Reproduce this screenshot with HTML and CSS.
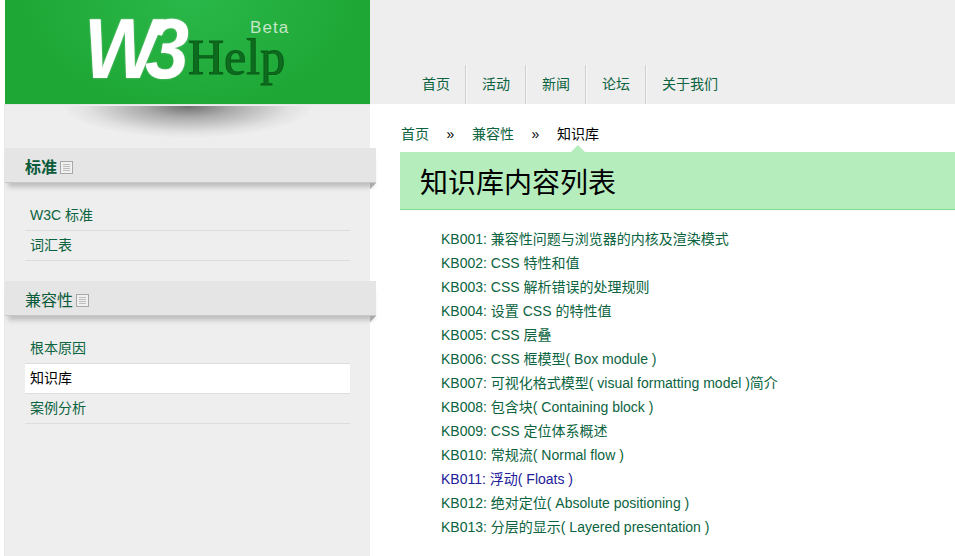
FILE: index.html
```html
<!DOCTYPE html>
<html lang="zh">
<head>
<meta charset="utf-8">
<title>W3Help 知识库</title>
<link rel="stylesheet" href="styles.css">
</head>
<body>
<header class="top">
  <a class="logo" href="#">
    <span class="logo-w3">W3</span>
    <span class="logo-help">Help</span>
    <span class="logo-beta">Beta</span>
  </a>
  <nav class="nav">
    <a href="#">首页</a>
    <a href="#">活动</a>
    <a href="#">新闻</a>
    <a href="#">论坛</a>
    <a href="#">关于我们</a>
  </nav>
</header>
<div class="page">
  <aside class="side">
    <div class="logo-shadow"></div>
    <section class="group">
      <h2 class="group-title">标准<svg class="ico" width="13" height="13" viewBox="0 0 13 13"><rect x=".5" y=".5" width="12" height="12" fill="#f0f0f0" stroke="#a8a8a8"/><path d="M3 3.5h7M3 5.5h7M3 7.5h7M3 9.5h7" stroke="#bdbdbd"/></svg></h2>
      <ul class="links">
        <li><a href="#">W3C 标准</a></li>
        <li><a href="#">词汇表</a></li>
      </ul>
    </section>
    <section class="group">
      <h2 class="group-title">兼容性<svg class="ico" width="13" height="13" viewBox="0 0 13 13"><rect x=".5" y=".5" width="12" height="12" fill="#f0f0f0" stroke="#a8a8a8"/><path d="M3 3.5h7M3 5.5h7M3 7.5h7M3 9.5h7" stroke="#bdbdbd"/></svg></h2>
      <ul class="links">
        <li><a href="#">根本原因</a></li>
        <li class="on"><a href="#">知识库</a></li>
        <li><a href="#">案例分析</a></li>
      </ul>
    </section>
  </aside>
  <main class="main">
    <div class="crumbs">
      <a href="#">首页</a><span class="sep">»</span><a href="#">兼容性</a><span class="sep">»</span><span class="cur">知识库</span>
    </div>
    <h1 class="title">知识库内容列表</h1>
    <ul class="kb">
      <li><a href="#">KB001: 兼容性问题与浏览器的内核及渲染模式</a></li>
      <li><a href="#">KB002: CSS 特性和值</a></li>
      <li><a href="#">KB003: CSS 解析错误的处理规则</a></li>
      <li><a href="#">KB004: 设置 CSS 的特性值</a></li>
      <li><a href="#">KB005: CSS 层叠</a></li>
      <li><a href="#">KB006: CSS 框模型( Box module )</a></li>
      <li><a href="#">KB007: 可视化格式模型( visual formatting model )简介</a></li>
      <li><a href="#">KB008: 包含块( Containing block )</a></li>
      <li><a href="#">KB009: CSS 定位体系概述</a></li>
      <li><a href="#">KB010: 常规流( Normal flow )</a></li>
      <li><a class="visited" href="#">KB011: 浮动( Floats )</a></li>
      <li><a href="#">KB012: 绝对定位( Absolute positioning )</a></li>
      <li><a href="#">KB013: 分层的显示( Layered presentation )</a></li>
    </ul>
  </main>
</div>
</body>
</html>
```
FILE: styles.css
```css
* { box-sizing: border-box; }
html, body { margin: 0; padding: 0; height: 100%; }
body {
  background: #fff;
  color: #000;
  font: 14px/24px "Liberation Sans", "Noto Sans CJK SC", sans-serif;
  overflow: hidden;
}
a { color: #0b6340; text-decoration: none; }
ul { list-style: none; margin: 0; padding: 0; }

.top { display: flex; height: 104px; padding-left: 5px; }
.logo {
  position: relative;
  display: block;
  flex: 0 0 365px;
  overflow: hidden;
  background: radial-gradient(ellipse 170px 110px at 185px 0, #2ab84a 0, #1ea735 100%);
}
.logo-w3 {
  position: absolute;
  left: 79px;
  top: 5px;
  font: italic bold 86px/86px "Liberation Sans", sans-serif;
  letter-spacing: -15px;
  color: #fff;
  text-shadow: 0 0 2px #9ac8a0;
  transform: scaleX(.92);
  transform-origin: 0 0;
}
.logo-help {
  position: absolute;
  left: 183px;
  top: 35px;
  font: 50px/44px "Liberation Serif", serif;
  color: #0e6c1f;
  -webkit-text-stroke: 1px #0a5c18;
}
.logo-beta {
  position: absolute;
  left: 245px;
  top: 20px;
  font: 17px/15px "Liberation Sans", sans-serif;
  letter-spacing: 1.1px;
  color: #c6e6c8;
}

.nav {
  flex: 1;
  display: flex;
  align-items: flex-end;
  background: #eee;
  padding-left: 36px;
}
.nav a {
  height: 39px;
  padding: 7px 15px 0 16px;
  border-right: 1px solid #cfcfcf;
  line-height: 24px;
  box-shadow: 1px 0 0 #f8f8f8;
}
.nav a:last-child { border-right: 0; box-shadow: none; }

.page { display: flex; height: 452px; padding-left: 4px; }
.side {
  flex: 0 0 366px;
  min-width: 0;
  background: #eee;
  border-left: 1px solid #e6e9e6;
}
.logo-shadow {
  height: 44px;
  background: radial-gradient(ellipse 125px 32px at 123px 0, #6f6f6f 0, #aaa 35%, #e0e0e0 80%, #eee 100%) no-repeat 60px 1px / 246px 34px;
  border-top: 1px solid #e4e4e4;
}
.group { margin-bottom: 20px; }
.group + .group { margin-bottom: 0; }
.group-title {
  position: relative;
  display: flex;
  align-items: center;
  width: 371px;
  height: 35px;
  margin: 0 0 7px;
  padding: 4px 0 0 20px;
  background: #e5e5e5;
  color: #0b5b3a;
  font-size: 16px;
  font-weight: bold;
  box-shadow: 0 7px 5px -3px #bdbdbd, inset 0 -1px 0 #c6c6c6;
}
.group-title::after {
  content: "";
  position: absolute;
  right: 0;
  top: 35px;
  border-top: 6px solid #a9a9a9;
  border-right: 6px solid transparent;
}
.group + .group .group-title { font-weight: normal; }
.ico { margin-left: 3px; }
.links { margin: 0 20px; padding-top: 11px; }
.links li { height: 30px; border-bottom: 1px solid #ddd; }
.links a { display: block; padding-left: 5px; line-height: 29px; }
.links .on { background: #fff; }
.links .on a { color: #000; }

.main { flex: 1; min-width: 0; padding-left: 30px; }
.crumbs { display: flex; height: 48px; padding: 18px 0 0 1px; line-height: 24px; }
.crumbs .sep { width: 43px; text-align: center; }
.cur { color: #000; }
.title {
  position: relative;
  height: 58px;
  margin: 0 0 17px;
  padding-left: 20px;
  background: #b5edbd;
  border-bottom: 1px solid #80d890;
  font-size: 28px;
  font-weight: normal;
  line-height: 64px;
}
.title::before {
  content: "";
  position: absolute;
  left: 171px;
  top: -7px;
  border-bottom: 7px solid #b5edbd;
  border-left: 7px solid transparent;
  border-right: 7px solid transparent;
}
.kb { padding-left: 41px; }
.kb li { height: 24px; }
.visited { color: #20209a; }
```
